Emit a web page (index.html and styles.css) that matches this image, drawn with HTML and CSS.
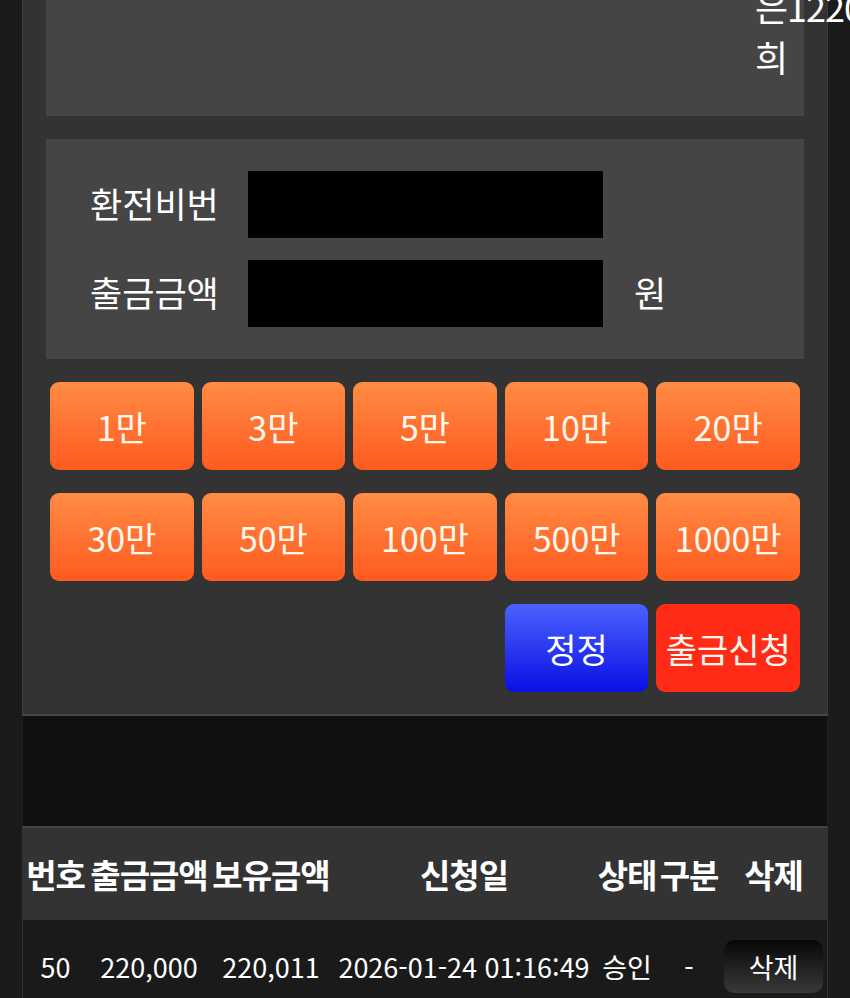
FILE: index.html
```html
<!DOCTYPE html>
<html lang="ko">
<head>
<meta charset="utf-8">
<title>출금신청</title>
<link rel="stylesheet" href="styles.css">
</head>
<body>
<div class="page">
  <section class="wrap">
    <div class="notice-panel">
      <div class="notice">은1220,000원<br>희</div>
    </div>
    <div class="form-panel">
      <div class="form-row">
        <label class="label">환전비번</label>
        <div class="input"></div>
      </div>
      <div class="form-row">
        <label class="label">출금금액</label>
        <div class="input"></div>
        <span class="unit">원</span>
      </div>
    </div>
    <div class="amounts">
      <button class="btn amt">1만</button>
      <button class="btn amt">3만</button>
      <button class="btn amt">5만</button>
      <button class="btn amt">10만</button>
      <button class="btn amt">20만</button>
      <button class="btn amt">30만</button>
      <button class="btn amt">50만</button>
      <button class="btn amt">100만</button>
      <button class="btn amt">500만</button>
      <button class="btn amt">1000만</button>
    </div>
    <div class="actions">
      <button class="btn reset">정정</button>
      <button class="btn submit">출금신청</button>
    </div>
  </section>
  <div class="spacer"></div>
  <section class="list">
    <div class="thead">
      <div>번호</div>
      <div>출금금액</div>
      <div>보유금액</div>
      <div>신청일</div>
      <div>상태</div>
      <div>구분</div>
      <div>삭제</div>
    </div>
    <div class="trow">
      <div>50</div>
      <div>220,000</div>
      <div>220,011</div>
      <div>2026-01-24 01:16:49</div>
      <div>승인</div>
      <div>-</div>
      <div><button class="del">삭제</button></div>
    </div>
  </section>
</div>
</body>
</html>
```

FILE: styles.css
```css
html, body {
  margin: 0;
  padding: 0;
  overflow: hidden;
  background: #1b1b1b;
  color: #fff;
  font-family: "Noto Sans CJK KR", "Noto Sans", sans-serif;
}

.page {
  width: 806px;
  margin-left: 22px;
  height: 998px;
}

.wrap {
  background: #333333;
  border-left: 1px solid #3d3d3d;
  border-right: 1px solid #3d3d3d;
  border-bottom: 2px solid #484848;
  padding: 0 23px 22px;
}

.notice-panel {
  background: #454545;
  height: 116px;
  display: flex;
  justify-content: flex-end;
}

.notice {
  width: 49px;
  margin-top: -19px;
  font-size: 36px;
  line-height: 50px;
  white-space: nowrap;
  color: #fff;
  letter-spacing: -1px;
}

.form-panel {
  margin-top: 23px;
  background: #454545;
  padding: 32px 0 32px 44px;
  display: flex;
  flex-direction: column;
  gap: 22px;
}

.form-row {
  display: flex;
  align-items: center;
  height: 67px;
}

.label {
  width: 158px;
  font-size: 35px;
  line-height: 1;
  margin-top: -4px;
  color: #fff;
}

.input {
  width: 355px;
  height: 67px;
  background: #000;
}

.unit {
  margin-left: 31px;
  font-size: 35px;
  line-height: 1;
  margin-top: -4px;
}

.amounts,
.actions {
  display: grid;
  grid-template-columns: repeat(5, 1fr);
  column-gap: 8px;
  row-gap: 23px;
  padding: 0 4px;
  margin-top: 23px;
}

.btn {
  border: 0;
  border-radius: 9px;
  height: 88px;
  color: #fff8ee;
  font-family: inherit;
  font-size: 34px;
  padding: 0;
}

.amt {
  background: linear-gradient(#ff8c44, #ff5a1f);
}

.reset {
  grid-column: 4;
  background: linear-gradient(#4b62ff, #0a0fe2);
  color: #fff;
}

.submit {
  grid-column: 5;
  background: #ff2b17;
}

.spacer {
  height: 110px;
  background: #101010;
  border-left: 1px solid #1e1e1e;
  border-right: 1px solid #1e1e1e;
}

.list {
  border-top: 2px solid #444;
  border-left: 1px solid #333;
  border-right: 1px solid #333;
}

.thead,
.trow {
  display: grid;
  grid-template-columns: 65px 122px 122px 264px 62px 62px 107px;
  align-items: center;
  text-align: center;
  white-space: nowrap;
}

.thead {
  background: #333333;
  height: 92px;
  font-size: 33px;
  font-weight: bold;
  letter-spacing: -1px;
}

.thead > div {
  display: flex;
  justify-content: center;
}

.trow {
  background: #1b1a1b;
  height: 120px;
  align-items: start;
  padding-top: 20px;
  font-size: 27px;
  line-height: 53px;
}

.del {
  width: 99px;
  height: 53px;
  border: 0;
  border-radius: 10px;
  background: linear-gradient(#080707, #3a3939);
  color: #fff;
  font-family: inherit;
  font-size: 27px;
  padding: 0;
  vertical-align: top;
}
```
